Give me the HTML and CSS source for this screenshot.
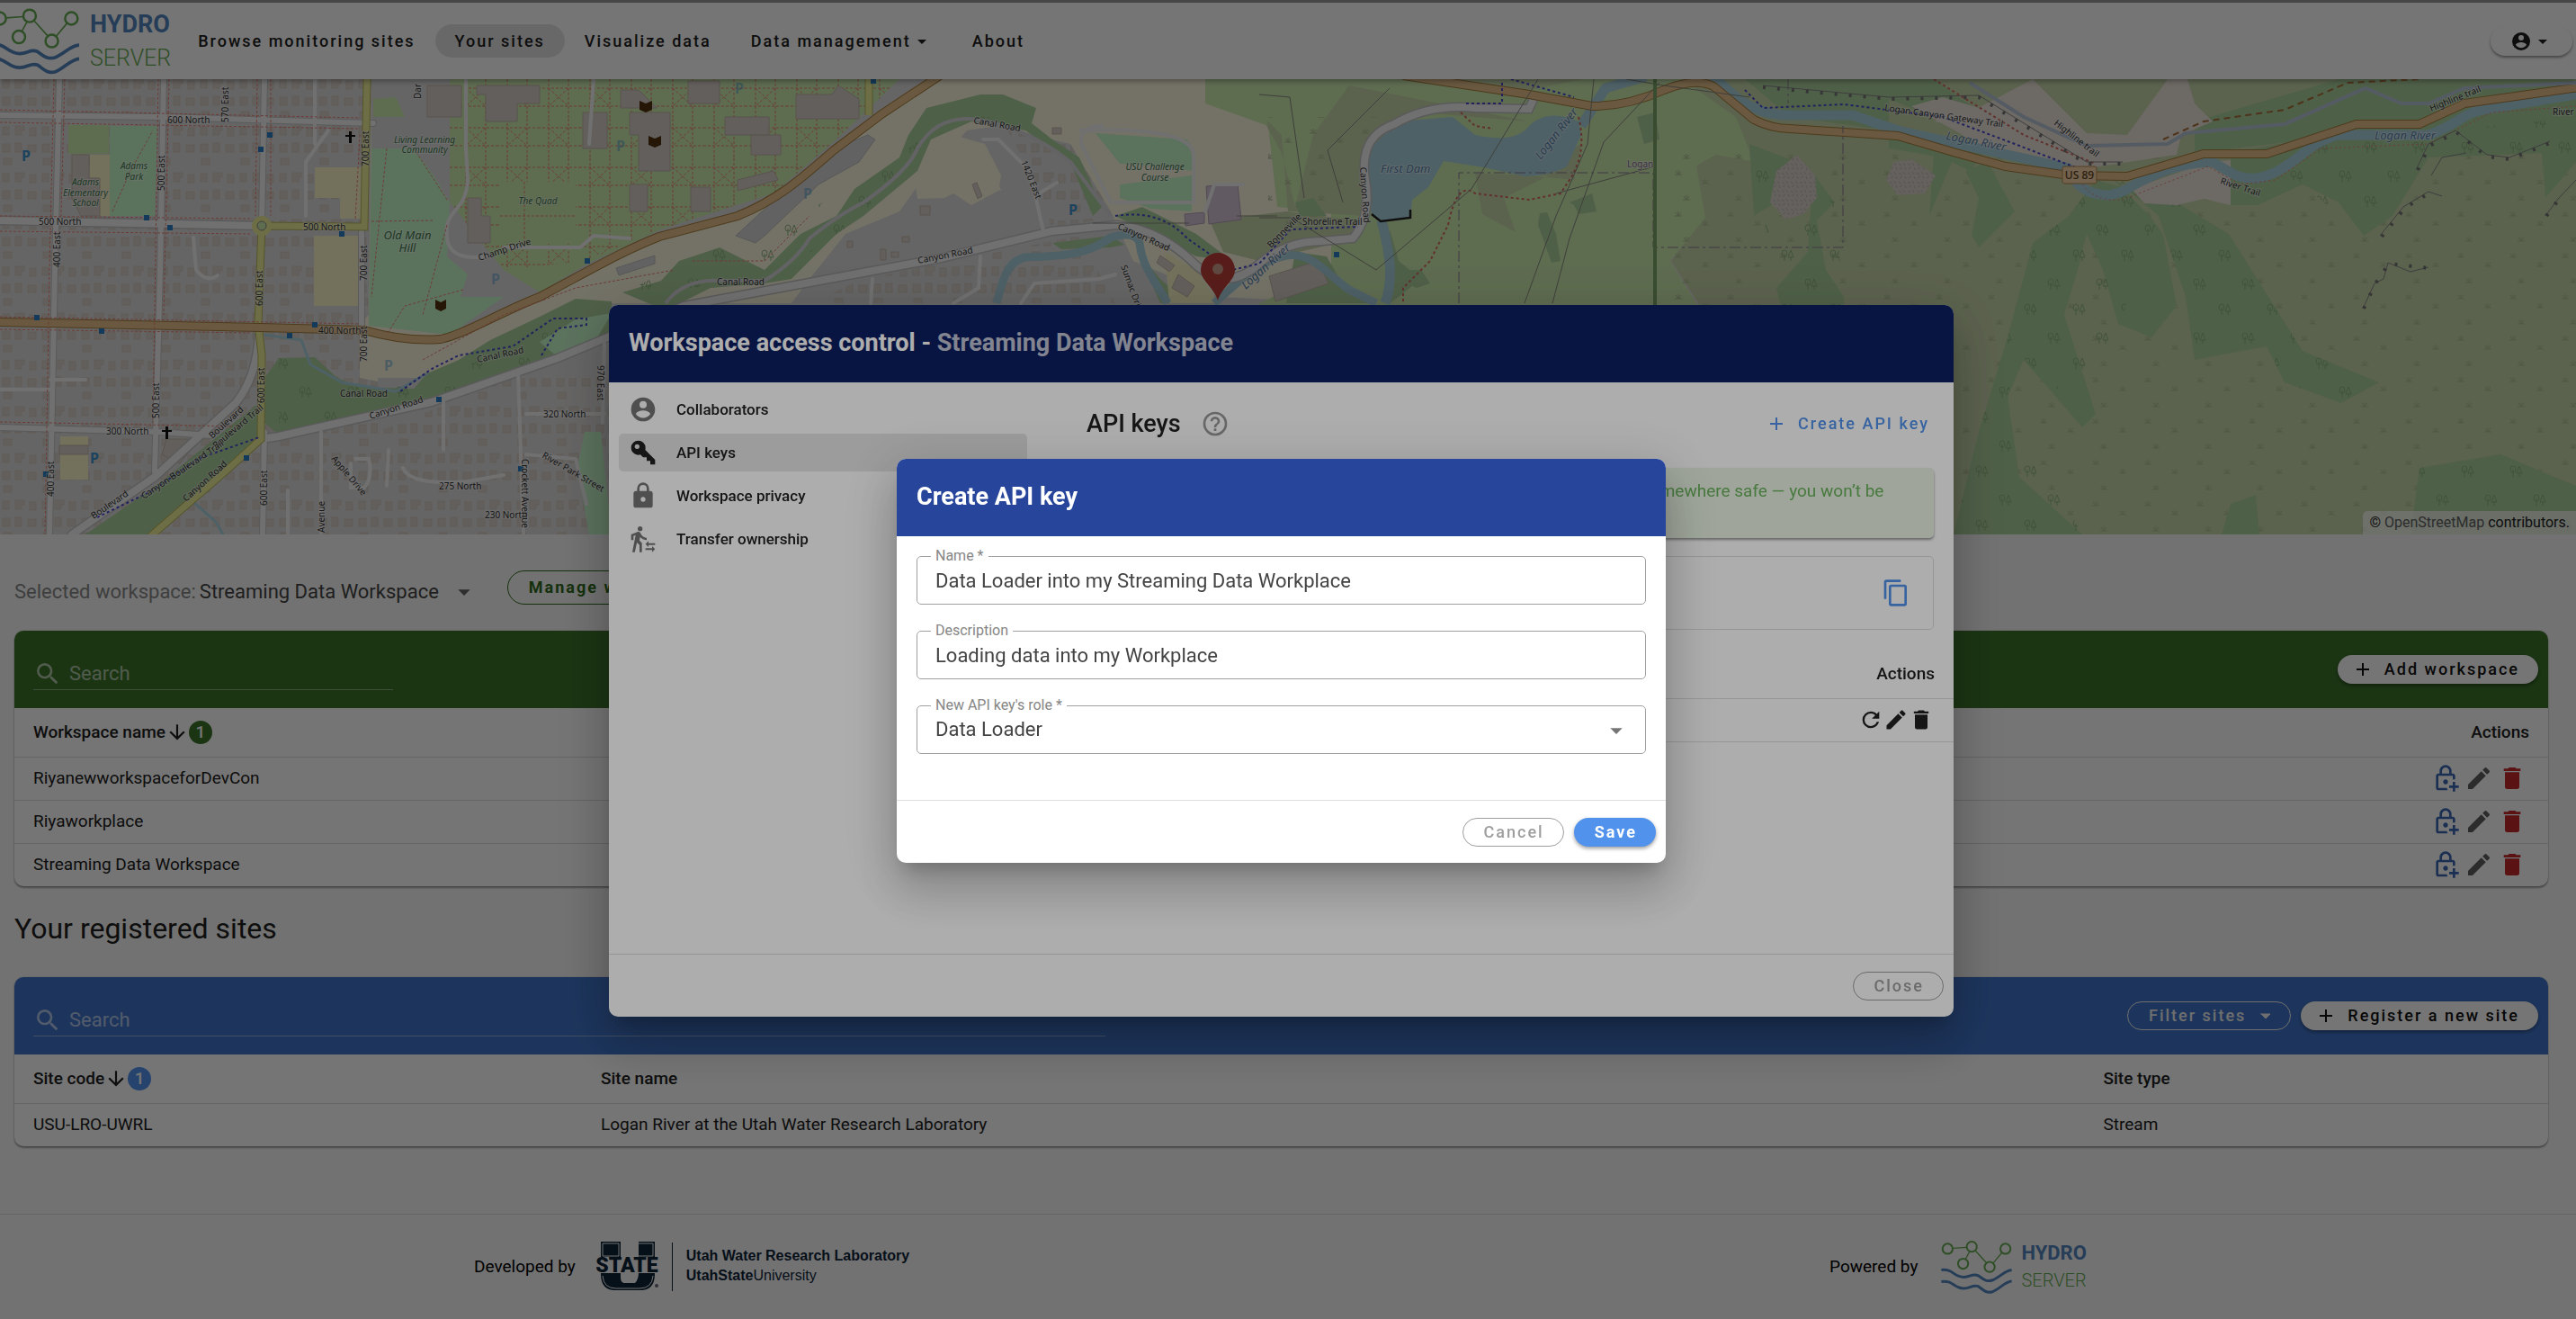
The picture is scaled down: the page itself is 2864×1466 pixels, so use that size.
FILE: index.html
```html
<!DOCTYPE html>
<html lang="en">
<head>
<meta charset="utf-8">
<meta name="viewport" content="width=device-width, initial-scale=1">
<title>HydroServer - Your sites</title>
<link rel="stylesheet" href="styles.css">
</head>
<body>
<svg class="defs" aria-hidden="true">
  <symbol id="i-account" viewBox="0 0 24 24"><path d="M12,19.2C9.5,19.2 7.29,17.92 6,16C6.03,14 10,12.9 12,12.9C14,12.9 17.97,14 18,16C16.71,17.92 14.5,19.2 12,19.2M12,5A3,3 0 0,1 15,8A3,3 0 0,1 12,11A3,3 0 0,1 9,8A3,3 0 0,1 12,5M12,2A10,10 0 0,0 2,12A10,10 0 0,0 12,22A10,10 0 0,0 22,12C22,6.47 17.5,2 12,2Z"/></symbol>
  <symbol id="i-down" viewBox="0 0 24 24"><path d="M7,10L12,15L17,10H7Z"/></symbol>
  <symbol id="i-key" viewBox="0 0 24 24"><path d="M22,18V22H18V19H15V16H12L9.74,13.74C9.19,13.91 8.61,14 8,14A6,6 0 0,1 2,8A6,6 0 0,1 8,2A6,6 0 0,1 14,8C14,8.61 13.91,9.19 13.74,9.74L22,18M7,5A2,2 0 0,0 5,7A2,2 0 0,0 7,9A2,2 0 0,0 9,7A2,2 0 0,0 7,5Z"/></symbol>
  <symbol id="i-lock" viewBox="0 0 24 24"><path d="M12,17A2,2 0 0,0 14,15C14,13.89 13.1,13 12,13A2,2 0 0,0 10,15A2,2 0 0,0 12,17M18,8A2,2 0 0,1 20,10V20A2,2 0 0,1 18,22H6A2,2 0 0,1 4,20V10C4,8.89 4.9,8 6,8H7V6A5,5 0 0,1 12,1A5,5 0 0,1 17,6V8H18M12,3A3,3 0 0,0 9,6V8H15V6A3,3 0 0,0 12,3Z"/></symbol>
  <symbol id="i-transfer" viewBox="0 0 24 24"><path d="M16.5,15.5H22V17H16.5V18.75L14,16.25L16.5,13.75V15.5M19.5,19.75V18L22,20.5L19.5,23V21.25H14V19.75H19.5M9.5,5.5A2,2 0 0,1 7.5,3.5A2,2 0 0,1 9.5,1.5A2,2 0 0,1 11.5,3.5A2,2 0 0,1 9.5,5.5M5.75,8.9L4,9.65V13H2V8.3L7.25,6.15C7.5,6.05 7.75,6 8,6C8.7,6 9.35,6.35 9.7,6.95L10.65,8.55C11.55,10 13.15,11 15,11V13C12.8,13 10.85,12 9.55,10.4L8.95,13.4L11,15.45V23H9V17L6.85,15L5.1,23H3L5.75,8.9Z"/></symbol>
  <symbol id="i-help" viewBox="0 0 24 24"><path d="M11,18H13V16H11V18M12,2A10,10 0 0,0 2,12A10,10 0 0,0 12,22A10,10 0 0,0 22,12A10,10 0 0,0 12,2M12,20C7.59,20 4,16.41 4,12C4,7.59 7.59,4 12,4C16.41,4 20,7.59 20,12C20,16.41 16.41,20 12,20M12,6A4,4 0 0,0 8,10H10A2,2 0 0,1 12,8A2,2 0 0,1 14,10C14,12 11,11.75 11,15H13C13,12.75 16,12.5 16,10A4,4 0 0,0 12,6Z"/></symbol>
  <symbol id="i-plus" viewBox="0 0 24 24"><path d="M19,13H13V19H11V13H5V11H11V5H13V11H19V13Z"/></symbol>
  <symbol id="i-copy" viewBox="0 0 24 24"><path d="M19,21H8V7H19M19,5H8A2,2 0 0,0 6,7V21A2,2 0 0,0 8,23H19A2,2 0 0,0 21,21V7A2,2 0 0,0 19,5M16,1H4A2,2 0 0,0 2,3V17H4V3H16V1Z"/></symbol>
  <symbol id="i-refresh" viewBox="0 0 24 24"><path d="M17.65,6.35C16.2,4.9 14.21,4 12,4A8,8 0 0,0 4,12A8,8 0 0,0 12,20C15.73,20 18.84,17.45 19.73,14H17.65C16.83,16.33 14.61,18 12,18A6,6 0 0,1 6,12A6,6 0 0,1 12,6C13.66,6 15.14,6.69 16.22,7.78L13,11H20V4L17.65,6.35Z"/></symbol>
  <symbol id="i-pencil" viewBox="0 0 24 24"><path d="M20.71,7.04C21.1,6.65 21.1,6 20.71,5.63L18.37,3.29C18,2.9 17.35,2.9 16.96,3.29L15.12,5.12L18.87,8.87M3,17.25V21H6.75L17.81,9.93L14.06,6.18L3,17.25Z"/></symbol>
  <symbol id="i-delete" viewBox="0 0 24 24"><path d="M19,4H15.5L14.5,3H9.5L8.5,4H5V6H19M6,19A2,2 0 0,0 8,21H16A2,2 0 0,0 18,19V7H6V19Z"/></symbol>
  <symbol id="i-lockplus" viewBox="0 0 24 24"><path d="M12 13C13.1 13 14 13.89 14 15C14 16.11 13.11 17 12 17S10 16.11 10 15 10.9 13 12 13M6 20V10H18V13.09C18.33 13.04 18.66 13 19 13C19.34 13 19.67 13.04 20 13.09V10C20 8.9 19.11 8 18 8H17V6C17 3.24 14.76 1 12 1S7 3.24 7 6V8H6C4.89 8 4 8.89 4 10V20C4 21.11 4.89 22 6 22H13.81C13.46 21.39 13.21 20.72 13.09 20H6M9 6C9 4.34 10.34 3 12 3S15 4.34 15 6V8H9V6M23 18V20H20V23H18V20H15V18H18V15H20V18H23Z"/></symbol>
  <symbol id="i-sort" viewBox="0 0 24 24"><path d="M11,4H13V16L18.5,10.5L19.92,11.92L12,19.84L4.08,11.92L5.5,10.5L11,16V4Z"/></symbol>
  <symbol id="i-search" viewBox="0 0 24 24"><path d="M9.5,3A6.5,6.5 0 0,1 16,9.5C16,11.11 15.41,12.59 14.44,13.73L14.71,14H15.5L20.5,19L19,20.5L14,15.5V14.71L13.73,14.44C12.59,15.41 11.11,16 9.5,16A6.5,6.5 0 0,1 3,9.5A6.5,6.5 0 0,1 9.5,3M9.5,5C7,5 5,7 5,9.5C5,12 7,14 9.5,14C12,14 14,12 14,9.5C14,7 12,5 9.5,5Z"/></symbol>
  <symbol id="i-hydro" viewBox="0 0 236 178">
    <g fill="none" stroke="#66aa52" stroke-width="6">
      <circle cx="21" cy="27" r="17"/><circle cx="102" cy="20" r="17"/><circle cx="73" cy="77" r="17"/><circle cx="162" cy="88" r="17"/><circle cx="215" cy="27" r="17"/>
      <path stroke-width="4" d="M38 25.500L85 22M95 36L81 62M114 33L151 74M174 75L203 40"/>
    </g>
    <path fill="none" stroke="#5585c0" stroke-width="9" d="M0 98C38 93 42 122 75 122C98 122 104 108 124 117C140 128 150 140 172 132C196 122 216 98 236 99M0 137C38 131 42 160 75 160C98 160 104 146 124 153C140 164 148 177 172 171C196 161 216 136 236 136"/>
  </symbol>
</svg>

<header class="nav">
  <a class="brand" href="#" aria-label="HydroServer">
    <svg class="brand-mark" aria-hidden="true"><use href="#i-hydro"/></svg>
    <span class="brand-words"><b>HYDRO</b><span>SERVER</span></span>
  </a>
  <nav class="nav-links">
    <a class="nav-link" href="#">Browse monitoring sites</a>
    <a class="nav-link active" href="#">Your sites</a>
    <a class="nav-link" href="#">Visualize data</a>
    <button class="nav-link" type="button">Data management<svg class="icon s24"><use href="#i-down"/></svg></button>
    <a class="nav-link" href="#">About</a>
  </nav>
  <button class="user" type="button" aria-label="Account"><svg class="icon s24"><use href="#i-account"/></svg><svg class="icon s24"><use href="#i-down"/></svg></button>
</header>

<section class="map" aria-label="Map of sites">
<svg class="map-art" viewBox="0 88 2864 506" preserveAspectRatio="xMidYMid slice">
  <defs>
    <pattern id="houses" width="44" height="52" patternUnits="userSpaceOnUse">
      <g fill="#d9d0c9" stroke="#cfc6be"><rect x="3" y="4" width="8" height="9"/><rect x="17" y="3" width="7" height="10"/><rect x="31" y="5" width="9" height="8"/><rect x="4" y="20" width="9" height="7"/><rect x="3" y="37" width="7" height="9"/><path d="M17 36h10v5h-3v5h-7z"/><rect x="33" y="38" width="7" height="9"/></g>
    </pattern>
    <pattern id="scrub" width="58" height="46" patternUnits="userSpaceOnUse">
      <g fill="none" stroke="#adbd92"><path d="M6 10h8M10 10v-5M7 6l3 4l3-4M36 20h8M40 20v-5M37 16l3 4l3-4M15 38h8M19 38v-5M16 34l3 4l3-4"/></g>
    </pattern>
    <pattern id="trees" width="54" height="60" patternUnits="userSpaceOnUse">
      <g fill="none" stroke="#8fb582"><path d="M12 22v-8M9 14a3 4 0 1 1 6 0a3 3 0 0 1-6 0M19 22v-5M16 18l3-8l3 8zM40 50v-8M37 42a3 4 0 1 1 6 0a3 3 0 0 1-6 0M47 50v-5M44 46l3-8l3 8z"/></g>
    </pattern>
    <pattern id="paths" width="46" height="44" patternUnits="userSpaceOnUse">
      <path d="M0 10H46M0 30H46M12 0V44M34 0V44M12 10L34 30M34 10L12 30" fill="none" stroke="#ee8378" stroke-dasharray="3 2"/>
    </pattern>
    <pattern id="rock" width="10" height="10" patternUnits="userSpaceOnUse"><rect width="10" height="10" fill="#dcd3ca"/><path d="M1 2l3 2M6 1l2 3M2 8l3-2M8 6l1 3" stroke="#bbb" fill="none"/></pattern>
  </defs>
  <rect y="88" width="2864" height="506" fill="#dfdddc"/>
  <rect y="88" width="700" height="506" fill="url(#houses)"/>

  <g class="land">
    <path fill="#fdf9e0" d="M413 88H1500V337H640L500 440L400 420V360L410 350Z"/>
    <path fill="#dddcdc" d="M413 88H1030L980 127L927 167L854 227L733 263L650 300L560 345L500 372L413 362Z"/>
    <path fill="#cdebb0" d="M500 88H1000L930 155L860 215L735 255L650 295L600 325L560 300L500 225Z"/>
    <path fill="url(#paths)" d="M500 88H1000L930 155L860 215L735 255L650 290L560 300L500 225Z"/>
    <path fill="#dddcdc" d="M1110 140L1075 145L1025 200L1000 235L940 260L900 310L880 337H1500L1355 330L1260 290L1235 235L1190 160Z"/>
    <path fill="#dddcdc" d="M420 480L620 400L760 345L700 420H420Z"/>
    <path fill="url(#houses)" d="M1120 145L1190 160L1235 235L1240 240L1170 255L1145 190ZM960 310L1200 262L1240 337H900Z"/>
    <path fill="#fdf9e0" d="M1078 190L1092 207L1113 212L1105 188zM1017 200L1020 221L1050 220L1060 215L1080 228L1110 212L1113 195L1095 160L1060 150L1035 170Z"/>
    <path fill="#cdebb0" d="M1340 88H1840V594H1440L1400 337L1480 300V235L1420 230L1410 140L1340 115Z"/>
    <path fill="#c8d7ab" d="M1400 125L1425 150L1432 235L1520 240L1540 150L1580 125L1700 135L1500 95L1460 150L1440 230L1425 170ZM1345 245L1430 235L1510 245L1510 265L1400 290L1360 280Z"/>
    <path fill="#c8d7ab" d="M1640 193L1648 238L1685 258L1672 220L1722 195zM1758 160L1750 200L1700 195ZM1550 88H1760L1700 100ZM1840 88H2864V594H1860L1890 340L1858 290L1895 240L1885 185L1908 170L1840 170Z"/>
    <path fill="#cdebb0" d="M1840 88H1870L1930 130L1950 180L1908 172L1886 184L1896 242L1857 290L1888 340H1840Z"/>
    <path fill="url(#scrub)" d="M1858 160H2864V594H1860ZM1410 130H1540V260H1410Z"/>
  </g>

  <g class="woods" fill="#add19e">
    <path d="M2172 594L2200 480L2232 375L2260 270L2300 240L2330 200L2420 225L2478 260L2560 390L2645 425L2603 448L2540 425L2520 385L2440 400L2430 330L2400 240L2340 190L2390 240L2405 260L2420 340L2392 375L2355 360L2338 300L2320 260L2310 300L2295 350L2330 460L2315 475L2250 400L2232 440L2245 530L2315 594Z"/>
    <path d="M1945 160L2010 185L2040 225L2020 245L2030 300L2050 330L2050 340H1980L1975 320L2010 280L2015 200L1950 240ZM2090 140L2210 165L2190 190L2170 180L2145 240L2150 170ZM2210 180L2240 235L2213 262L2200 275L2192 262L2200 220L2185 190Z"/>
    <path d="M2480 170L2864 100V180L2830 220L2826 170L2700 175L2660 240L2628 262L2600 225L2560 205L2510 228H2480ZM2440 135L2600 88H2864V120L2700 140L2440 170ZM2100 88H2150L2260 165L2200 150L2100 110ZM2100 145L2280 195L2100 165Z"/>
    <path d="M2690 520L2780 505L2864 540V594H2680ZM2480 560L2508 550L2512 594H2470ZM1940 88H2100V145L1990 130Z"/>
    <path d="M1550 300L1580 300L1590 315L1575 320L1555 312ZM1712 237L1720 236L1730 260L1735 290L1725 292L1710 250ZM1745 225L1770 215L1775 235L1755 238L1750 228ZM1440 225L1460 220L1475 240L1445 240ZM1820 130L1840 125L1845 155L1828 160Z"/>
    <path d="M310 398L350 397L375 420L400 430L460 432L475 415L510 400L545 378L600 352L640 332L680 335V378L620 398L480 447L310 483L294 470L294 420ZM290 488L250 520L205 562L165 594H95L130 570L180 535L285 450Z"/>
    <path d="M692 325L735 312L755 290L800 275L850 300L890 260L930 240L950 210L1000 175L1010 150L1030 120L1090 105L1115 105L1152 120L1147 137L1170 155L1200 175L1225 230L1215 240L1190 180L1140 145L1080 135L1035 155L1020 190L960 240L930 260L880 310L850 315L790 320L740 345Z"/>
    <path d="M1240 240L1270 230L1330 260L1370 290L1330 285L1270 255ZM1170 270L1235 262L1250 272L1235 275L1180 277ZM1265 280L1290 310L1320 337H1290ZM1440 280L1475 285L1495 320L1530 337H1430ZM1545 255L1555 290L1580 310L1555 330L1545 337Z"/>
  </g>
  <path fill="url(#trees)" d="M2172 594L2200 480L2232 375L2260 270L2300 240L2330 200L2420 225L2478 260L2560 390L2645 425L2603 448L2540 425L2520 385L2440 400L2430 330L2400 240L2320 460L2250 400L2232 440L2315 594ZM2480 170L2864 130V180L2700 175L2628 262L2560 205ZM1945 160L2040 225L2050 340H1980ZM310 398L460 432L680 335L620 398L480 447L310 483ZM692 325L800 275L950 210L1090 105L1152 120L1080 135L960 240L850 315ZM2690 520L2780 505L2864 540V594H2680Z"/>
  <path fill="#eee5dc" d="M2260 88L2320 148L2365 150L2410 88H2432L2440 115L2460 135L2425 150L2420 172L2300 190L2180 140L2150 135L2190 125ZM2370 210L2455 180L2480 178V228L2450 221L2420 228L2384 226ZM2125 118L2160 108L2200 120L2280 180L2200 160Z"/>
  <path fill="url(#rock)" d="M1998 172L2018 195L2020 220L2005 238L1985 244L1968 225L1975 190ZM2125 177L2152 195L2140 215L2110 217L2097 200L2105 180Z"/>

  <!-- Parks, fields and large buildings -->
  <g>
    <path fill="#c8facc" d="M413 165L460 165L482 195L500 225L497 285L520 305L512 330L560 330L500 372L410 362ZM122 140L175 140L172 240H122ZM1218 148L1320 155L1328 170L1325 190L1295 185L1245 182ZM1245 205L1325 195V235L1280 232L1245 220ZM660 382L618 395L600 380L640 355L680 348ZM650 480H668L680 594H655L642 520Z"/>
    <path fill="#cdebb0" d="M556 202H640V271H556ZM76 139H121V171H76ZM415 110L440 108L450 130L415 130ZM1350 88H1400L1410 140L1350 115Z"/>
    <path fill="#fbf7c8" d="M350 186H402V243H378V220H350ZM100 172H122V240H110V198H100ZM67 485H98V533H67ZM349 262H400V340H349ZM1295 280L1330 300L1355 337H1300Z"/>
    <path fill="#d9d0c9" stroke="#c3b6aa" d="M530 95H600V115H575V135H540V105H530ZM475 95H513V130H475ZM80 172H99V198H111V240H90L80 220ZM520 220H535V240H545V270H520ZM648 125H675V165H648ZM690 100H710L730 120H690ZM700 125H745V190H710V150H700ZM765 90H800V115H765ZM806 130H855V150H806ZM885 105H925L932 95L955 110V132H885ZM835 150H868V172H835ZM768 208H790V235H768ZM700 205H720V235H700ZM185 488H212V500L200 515L180 505ZM66 495H98V505H66ZM820 200L860 190L865 200L820 212Z"/>
    <path fill="#d3c5d6" stroke="#b5a0b8" d="M1341 207L1376 204L1380 244L1344 249ZM1317 238L1339 236V248L1318 251Z"/>
    <path fill="#d9d0c9" stroke="#c3b6aa" d="M1411 307L1465 290L1477 315L1418 335ZM1290 284L1306 295L1300 302L1286 292ZM1310 305L1328 318L1320 330L1303 320ZM1081 205L1086 203L1092 218L1087 221ZM1170 142h10v7h-10zM1023 229h11v10h-11zM942 268h6v7h-6zM979 277h6v12h-6zM991 280h8v6h-8zM1003 263h8v6h-8z"/>
    <path fill="#d6d6d6" stroke="#bfbfbf" d="M818 262L880 205L900 190L940 160L965 150L973 155L955 180L910 205L850 262L840 270ZM685 298L728 284L728 293L688 306Z"/>
  </g>

  <g fill="none" stroke="#aad3df" stroke-linejoin="round">
    <path stroke-width="9" d="M1108 337C1115 310 1120 290 1140 286C1180 284 1205 285 1235 264Q1262 256 1267 270C1270 300 1290 320 1298 337M1350 337C1380 310 1400 290 1430 284C1460 280 1475 305 1500 322L1530 337"/>
    <path stroke-width="11" d="M1536 245C1545 280 1550 310 1540 337M1830 85L1785 98L1758 140M1905 85C1930 110 1950 128 1990 128L2060 128L2110 145L2200 165L2300 187Q2310 217 2345 217Q2360 214 2370 207C2400 190 2430 180 2460 180C2480 192 2490 200 2510 198C2550 190 2560 160 2600 150H2700C2730 140 2740 125 2760 122L2864 105"/>
    <path stroke-width="3" d="M294 372L335 378L345 405L380 425L440 435L475 415M165 594L215 558L240 580L248 594"/>
  </g>
  <path fill="#aad3df" d="M1523 165L1555 135L1615 130L1640 150Q1685 160 1700 140Q1720 120 1755 135L1758 150L1742 185Q1725 195 1695 196L1650 186L1605 179L1588 208L1570 222L1568 242L1535 245L1525 238L1518 200Z"/>
  <path fill="none" stroke="#222" stroke-width="2.500" d="M1525 238L1535 246L1568 242V233"/>

  <!-- Streets -->
  <g class="streets" fill="none">
    <path class="case" stroke-width="8" d="M66 88L61 300L55 594M182 88L178 300L172 524M294 88L291 250M0 128L183 130L415 137M0 475L175 480L235 484M294 480L292 594M402 258V365"/>
    <path class="case" stroke-width="11" d="M0 245L291 251M80 594L172 530L262 448Q285 420 288 372M290 488L310 485L480 447L620 398L760 340L1046 287L1169 257L1242 250Q1290 255 1330 295Q1365 325 1400 293Q1430 268 1470 268L1504 265Q1525 240 1518 200C1512 160 1530 145 1550 138Q1590 115 1640 120L1700 121L1706 108"/>
    <path class="white" stroke-width="6" d="M66 88L61 300L55 594M182 88L178 300L172 524M294 88L291 250M0 128L183 130L415 137M0 475L175 480L235 484M294 480L292 594M402 258V365"/>
    <path class="white" stroke-width="4" d="M357 480V594M493 445V500M576 415L582 594M585 460H672M365 145L340 180V240M350 160V88M215 264L218 300Q230 315 242 306M660 88L655 160M0 433H56M56 422H95M320 545V594M448 520Q455 540 520 535L560 528M585 505L640 510L652 560M970 310L968 337M1090 285L1088 320L1060 337M1160 257L1145 190L1110 155L1093 155M1155 215L1175 203M1240 305L1222 310L1150 315L1135 337M430 540L432 500M672 382L670 470M395 510H410Q415 530 405 542H390V515"/>
    <path class="white" stroke-width="4" d="M518 88V165L520 200C518 240 490 230 498 270Q505 290 540 285M560 275H645L660 262L700 265M1201 145Q1330 140 1327 175V225L1240 225M1340 235L1350 205H1382M1225 140Q1200 140 1202 160L1235 225"/>
    <path stroke="#d9d9dd" stroke-width="4" d="M740 337Q760 310 800 312L850 312Q885 290 900 265Q930 240 960 225Q1010 190 1020 165Q1040 130 1080 132Q1140 140 1190 180L1235 240"/>
    <path class="white" stroke-width="8" d="M0 245L291 251M80 594L172 530L262 448Q285 420 288 372M290 488L310 485L480 447L620 398L760 340L1046 287L1169 257L1242 250Q1290 255 1330 295Q1365 325 1400 293Q1430 268 1470 268L1504 265Q1525 240 1518 200C1512 160 1530 145 1550 138Q1590 115 1640 120L1700 121L1706 108"/>
    <path stroke="#b9b85e" stroke-width="9" d="M408 88L405 252L291 251L287 360L291 395L290 488L255 520L165 598M966 88V128"/>
    <path stroke="#eef09a" stroke-width="7" d="M408 88L405 252L291 251L287 360L291 395L290 488L255 520L165 598M966 88V128"/>
    <circle cx="291" cy="251" r="11" fill="#eef09a"/><circle cx="291" cy="251" r="5" fill="#cdebb0" stroke="#888"/>
    <path stroke="#a9813f" stroke-width="10" d="M0 358L290 364L405 367Q450 380 490 377C520 370 560 345 600 330C660 298 690 280 733 263L820 240C870 220 900 190 927 167L980 127L1045 84M1560 84L1700 105L1770 118Q1810 118 1850 100Q1885 86 1905 96L1950 133Q1970 143 1990 143L2110 151L2175 170L2230 185L2300 195L2365 196L2450 171H2520L2620 138H2690L2740 115L2868 97"/>
    <path stroke="#e6c28c" stroke-width="8" d="M0 358L290 364L405 367Q450 380 490 377C520 370 560 345 600 330C660 298 690 280 733 263L820 240C870 220 900 190 927 167L980 127L1045 84M1560 84L1700 105L1770 118Q1810 118 1850 100Q1885 86 1905 96L1950 133Q1970 143 1990 143L2110 151L2175 170L2230 185L2300 195L2365 196L2450 171H2520L2620 138H2690L2740 115L2868 97"/>
  </g>

  <!-- Footways, trails, power lines, boundaries -->
  <g fill="none">
    <path stroke="#ee8378" stroke-dasharray="3 2" d="M60 88L55 300L50 594M72 88L68 240M176 88L170 470M188 88L182 350M286 88L284 240M301 88V240M0 122L400 131M0 136L400 143M0 352L400 360M0 366L280 370M0 240L280 243M0 257L280 260M0 469L270 474M400 150L395 245M583 202V270M556 240H640M413 246L482 245M460 165L497 222M430 165L413 330M497 250L470 350M515 322L450 340L430 372M125 235L145 190L170 145M470 400L560 350L640 320L750 300M770 290L850 290L900 240"/>
    <path stroke="#d66b62" stroke-width="2" stroke-dasharray="3 3" d="M1755 130Q1765 170 1745 200L1735 215L1700 222L1640 215Q1620 200 1610 250L1590 290L1560 320V337M1624 125L1640 140L1660 143M2150 88L2250 150L2330 182"/>
    <path stroke="#4b4bd0" stroke-width="2" stroke-dasharray="3 3" d="M108 575L170 545L220 510L288 486M602 395L620 365L652 361V354L615 354L570 385L510 395L480 410L445 435M1240 240Q1290 232 1320 265L1370 300L1400 293L1435 255L1510 252M1630 115H1670V90M1680 88L1750 108M1940 100L1960 120L2050 116L2160 130L2240 160L2310 187"/>
    <path stroke="#8a8a80" d="M1710 88L1636 210L1530 300L1436 242H1400M1772 88L1765 160L1730 240L1695 337M1845 92L1783 158L1745 265L1726 337M1400 105L1434 108L1450 220M1545 98L1476 167L1493 225M1840 185L1730 215M1808 88L1850 95L1945 108M1375 240H1420M1215 248H1322"/>
    <path stroke="#8d7f91" stroke-dasharray="12 4 3 4" d="M1622 337V192H1838V275H2049V140M1988 88V115"/>
    <path stroke="#7da76a" stroke-width="4" d="M1840 88V594"/>
    <path stroke="#a9713a" stroke-width="2" stroke-dasharray="7 5" d="M2405 155L2450 135L2540 122L2610 92L2690 88"/>
    <path stroke="#b8c7d8" stroke-width="4" d="M2190 92L2250 130L2320 162L2410 160L2430 148L2540 138L2630 98L2670 115L2700 115L2740 98L2864 92"/>
    <path stroke="#ee8378" stroke-dasharray="2 3" d="M2315 205Q2330 225 2360 222L2455 185L2490 205L2530 200L2580 165L2700 160L2770 125L2864 118"/>
    <path stroke="#888" d="M1960 95L2100 108L2200 106L2320 180L2360 180M2687 187L2700 160L2730 145L2765 172L2790 175L2835 157M2703 195L2715 175L2742 170M2646 262L2672 230L2700 213L2715 218M2627 343L2640 315L2650 310L2655 292L2680 302L2700 297M2830 240L2845 220L2864 200"/>
    <path stroke="#777" stroke-width="4" stroke-dasharray="3 13" d="M1960 97L2100 110L2200 108L2320 182L2360 182M2688 189L2701 162L2731 147L2765 174L2790 177L2835 159M2648 263L2674 231L2700 215M2628 343L2641 315L2656 293L2700 298M2831 240L2846 220"/>
  </g>

  <path fill="#2b7fc4" d="M297 147h6v6h-6zM287 163h6v6h-6zM160 239h6v6h-6zM186 250h6v6h-6zM377 257h6v6h-6zM38 350h6v6h-6zM110 365h6v6h-6zM347 358h6v6h-6zM319 370h6v6h-6zM485 441h6v6h-6zM271 506h6v6h-6zM48 524h6v6h-6zM576 518h6v6h-6zM650 287h6v6h-6zM968 87h6v6h-6zM1483 280h6v6h-6z"/>
  <path fill="#51310f" d="M711 112l7 3l7-3v10l-7 3l-7-3zM721 151l7 3l7-3v10l-7 3l-7-3zM484 333l6 3l6-3v10l-6 3l-6-3z"/>
  <path fill="#111" d="M388 146h3v4h4v2h-4v7h-3v-7h-4v-2h4zM184 474h3v4h4v2h-4v8h-3v-8h-4v-2h4z"/>

  <g class="lbl">
    <text x="186" y="137">600 North</text><text x="43" y="250">500 North</text><text x="337" y="256">500 North</text><text x="354" y="371">400 North</text><text x="118" y="483">300 North</text>
    <text x="604" y="464">320 North</text><text x="488" y="544">275 North</text><text x="539" y="576">230 North</text>
    <text transform="translate(67 297) rotate(-90)">400 East</text><text transform="translate(60 552) rotate(-90)">400 East</text><text transform="translate(183 212) rotate(-90)">500 East</text><text transform="translate(177 465) rotate(-90)">500 East</text>
    <text transform="translate(292 340) rotate(-90)">600 East</text><text transform="translate(294 448) rotate(-90)">600 East</text><text transform="translate(297 562) rotate(-90)">600 East</text><text transform="translate(254 136) rotate(-90)">570 East</text>
    <text transform="translate(410 185) rotate(-90)">700 East</text><text transform="translate(408 312) rotate(-90)">700 East</text><text transform="translate(408 402) rotate(-90)">700 East</text><text transform="translate(361 592) rotate(-90)">Avenue</text>
    <text transform="translate(580 510) rotate(90)">Crockett Avenue</text><text transform="translate(664 406) rotate(90)">970 East</text><text transform="translate(468 110) rotate(-90)">Dar</text>
    <text transform="translate(104 577) rotate(-34)">Boulevard</text><text transform="translate(236 488) rotate(-42)">Boulevard</text><text transform="translate(240 499) rotate(-40)">Boulevard Trail</text><text transform="translate(160 555) rotate(-34)">Canyon Boulevard Trail</text><text transform="translate(207 558) rotate(-42)">Canyon Road</text>
    <text transform="translate(412 466) rotate(-18)">Canyon Road</text><text x="378" y="441">Canal Road</text><text transform="translate(531 403) rotate(-12)">Canal Road</text><text transform="translate(533 290) rotate(-18)">Champ Drive</text>
    <text transform="translate(368 510) rotate(50)">Apple Drive</text><text transform="translate(602 508) rotate(30)">River Park Street</text>
    <text transform="translate(1082 137) rotate(10)">Canal Road</text><text x="797" y="317">Canal Road</text><text transform="translate(1021 293) rotate(-11)">Canyon Road</text><text transform="translate(1242 254) rotate(24)">Canyon Road</text>
    <text transform="translate(1135 180) rotate(68)">1420 East</text><text transform="translate(1246 296) rotate(70)">Sumac Drive</text><text transform="translate(1512 186) rotate(86)">Canyon Road</text>
    <text transform="translate(1413 276) rotate(-45)">Bonneville</text><text x="1448" y="250">Shoreline Trail</text><text transform="translate(2095 123) rotate(8)">Logan Canyon Gateway Trail</text>
    <text transform="translate(2283 138) rotate(38)">Highline trail</text><text transform="translate(2703 124) rotate(-22)">Highline trail</text><text transform="translate(2468 204) rotate(18)">River Trail</text><text x="2838" y="128">River</text><text x="1809" y="186" fill="#8a6a92">Logan</text>
  </g>
  <g class="lbl green">
    <text x="149" y="188" text-anchor="middle">Adams<tspan x="149" dy="12">Park</tspan></text><text x="95" y="206" text-anchor="middle">Adams<tspan x="95" dy="12">Elementary</tspan><tspan x="95" dy="11">School</tspan></text>
    <text class="big" x="453" y="266" text-anchor="middle">Old Main<tspan x="453" dy="14">Hill</tspan></text><text x="598" y="227" text-anchor="middle">The Quad</text><text x="1284" y="189" text-anchor="middle">USU Challenge<tspan x="1284" dy="12">Course</tspan></text>
    <text x="472" y="159" text-anchor="middle">Living Learning<tspan x="472" dy="11">Community</tspan></text>
  </g>
  <g class="lbl blue big">
    <text x="1535" y="192">First Dam</text><text transform="translate(1713 178) rotate(-52)">Logan River</text><text transform="translate(1385 322) rotate(-42)">Logan River</text><text transform="translate(2163 155) rotate(11)">Logan River</text><text x="2640" y="155">Logan River</text>
  </g>
  <g class="park-p"><text x="24" y="179">P</text><text x="100" y="515">P</text><g opacity=".45"><text x="546" y="316">P</text><text x="427" y="412">P</text><text x="685" y="168">P</text><text x="893" y="221">P</text><text x="817" y="104">P</text></g><text x="1188" y="239">P</text></g>
  <rect x="2293" y="185" width="38" height="19" rx="2" fill="#f6d3a8" stroke="#b98b50"/><text class="shield" x="2312" y="199" text-anchor="middle">US 89</text>
  <path fill="#c0403a" d="M1354 334C1349 318 1335 312 1335 300A19 19 0 1 1 1373 300C1373 312 1359 318 1354 334Z"/><circle cx="1354" cy="299" r="6" fill="#cfa08f"/>
</svg>
<p class="attribution">© <a href="#">OpenStreetMap</a> contributors.</p>
</section>

<main class="page">
  <div class="picker">
    <label for="ws">Selected workspace:</label>
    <div class="picker-control"><select id="ws"><option>Streaming Data Workspace</option></select><svg class="icon s32"><use href="#i-down"/></svg></div>
    <button class="btn outline green" type="button">Manage workspace</button>
  </div>

  <section class="card">
    <div class="bar bar-green">
      <label class="search"><svg class="icon s32"><use href="#i-search"/></svg><input type="text" placeholder="Search" aria-label="Search workspaces"></label>
      <button class="btn light" type="button"><svg class="icon s24"><use href="#i-plus"/></svg>Add workspace</button>
    </div>
    <table>
      <thead><tr><th><span class="sort">Workspace name<svg class="icon"><use href="#i-sort"/></svg><span class="badge">1</span></span></th><th class="right">Actions</th></tr></thead>
      <tbody>
        <tr><td>RiyanewworkspaceforDevCon</td><td><div class="actions"><button type="button" aria-label="Access" class="c-blue"><svg class="icon s32"><use href="#i-lockplus"/></svg></button><button type="button" aria-label="Edit" class="c-grey"><svg class="icon s32"><use href="#i-pencil"/></svg></button><button type="button" aria-label="Delete" class="c-red"><svg class="icon s32"><use href="#i-delete"/></svg></button></div></td></tr>
        <tr><td>Riyaworkplace</td><td><div class="actions"><button type="button" aria-label="Access" class="c-blue"><svg class="icon s32"><use href="#i-lockplus"/></svg></button><button type="button" aria-label="Edit" class="c-grey"><svg class="icon s32"><use href="#i-pencil"/></svg></button><button type="button" aria-label="Delete" class="c-red"><svg class="icon s32"><use href="#i-delete"/></svg></button></div></td></tr>
        <tr><td>Streaming Data Workspace</td><td><div class="actions"><button type="button" aria-label="Access" class="c-blue"><svg class="icon s32"><use href="#i-lockplus"/></svg></button><button type="button" aria-label="Edit" class="c-grey"><svg class="icon s32"><use href="#i-pencil"/></svg></button><button type="button" aria-label="Delete" class="c-red"><svg class="icon s32"><use href="#i-delete"/></svg></button></div></td></tr>
      </tbody>
    </table>
  </section>

  <h2>Your registered sites</h2>

  <section class="card">
    <div class="bar bar-blue">
      <label class="search wide"><svg class="icon s32"><use href="#i-search"/></svg><input type="text" placeholder="Search" aria-label="Search sites"></label>
      <button class="btn outline white" type="button">Filter sites<svg class="icon s24"><use href="#i-down"/></svg></button>
      <button class="btn light" type="button"><svg class="icon s24"><use href="#i-plus"/></svg>Register a new site</button>
    </div>
    <table class="sites">
      <thead><tr><th><span class="sort">Site code<svg class="icon"><use href="#i-sort"/></svg><span class="badge blue">1</span></span></th><th>Site name</th><th>Site type</th></tr></thead>
      <tbody><tr><td>USU-LRO-UWRL</td><td>Logan River at the Utah Water Research Laboratory</td><td>Stream</td></tr></tbody>
    </table>
  </section>
</main>

<footer class="footer">
  <div class="credit">Developed by
    <svg class="usu" viewBox="0 0 76 56" aria-hidden="true">
      <path fill="#0f2439" d="M6 0H28V34Q28 42 32 46H44Q48 42 48 34V0H66V36Q66 54 50 54H22Q6 54 6 36Z"/>
      <path fill="#f9f9f9" d="M28 0H44V20H28ZM28 34H46V40Q46 46 41 46H33Q28 46 28 40Z"/>
      <path fill="none" stroke="#f9f9f9" d="M8 2H26V16H8ZM46 2H64V16H46ZM8 38Q9 52 23 52H49Q63 52 64 38"/>
      <rect y="17" width="70" height="18" fill="#f9f9f9"/>
      <text x="35" y="34" text-anchor="middle">STATE</text><circle cx="68" cy="49" r="2" fill="#667"/>
    </svg>
    <div class="usu-words"><strong>Utah Water Research Laboratory</strong><span><b>UtahState</b>University</span></div>
  </div>
  <div class="credit">Powered by
    <span class="brand small"><svg class="brand-mark" aria-hidden="true"><use href="#i-hydro"/></svg><span class="brand-words"><b>HYDRO</b><span>SERVER</span></span></span>
  </div>
</footer>

<div class="overlay">
  <section class="dialog access" role="dialog" aria-label="Workspace access control">
    <h3 class="dialog-title navy">Workspace access control - <span>Streaming Data Workspace</span></h3>
    <div class="access-body">
      <nav class="side">
        <a href="#"><svg class="icon s32"><use href="#i-account"/></svg>Collaborators</a>
        <a href="#" class="on"><svg class="icon s32"><use href="#i-key"/></svg>API keys</a>
        <a href="#"><svg class="icon s32"><use href="#i-lock"/></svg>Workspace privacy</a>
        <a href="#"><svg class="icon s32"><use href="#i-transfer"/></svg>Transfer ownership</a>
      </nav>
      <div class="panel">
        <div class="panel-head"><h4>API keys</h4><svg class="icon s32 c-help"><use href="#i-help"/></svg><button class="btn text" type="button"><svg class="icon s24"><use href="#i-plus"/></svg>Create API key</button></div>
        <p class="notice">Your new API key has been created. Copy the key value now and store it somewhere safe — you won’t be<br>able to see it again.</p>
        <div class="keybox"><button type="button" aria-label="Copy key"><svg class="icon s32"><use href="#i-copy"/></svg></button></div>
        <table class="keys">
          <thead><tr><th>Name</th><th class="right">Actions</th></tr></thead>
          <tbody><tr><td></td><td><div class="actions tight"><button type="button" aria-label="Regenerate"><svg class="icon s28"><use href="#i-refresh"/></svg></button><button type="button" aria-label="Edit"><svg class="icon s28"><use href="#i-pencil"/></svg></button><button type="button" aria-label="Delete"><svg class="icon s28"><use href="#i-delete"/></svg></button></div></td></tr></tbody>
        </table>
      </div>
    </div>
    <div class="dialog-foot"><button class="btn outline grey" type="button">Close</button></div>
  </section>
</div>

<div class="overlay">
  <form class="dialog create" role="dialog" aria-label="Create API key">
    <h3 class="dialog-title royal">Create API key</h3>
    <div class="fields">
      <div class="field"><label for="f-name">Name *</label><input id="f-name" type="text" value="Data Loader into my Streaming Data Workplace"></div>
      <div class="field"><label for="f-desc">Description</label><input id="f-desc" type="text" value="Loading data into my Workplace"></div>
      <div class="field"><label for="f-role">New API key's role *</label><select id="f-role"><option>Data Loader</option></select><svg class="icon s32 field-caret"><use href="#i-down"/></svg></div>
    </div>
    <div class="dialog-foot"><button class="btn outline grey" type="button">Cancel</button><button class="btn save" type="button">Save</button></div>
  </form>
</div>
</body>
</html>
```
FILE: styles.css
```css
:root {
  --ink: #212121;
  --green: #3c752b;
  --blue: #4175cb;
  --sky: #5193ec;
  --line: #dedede;
}
* { box-sizing: border-box; }
body {
  margin: 0;
  min-height: 100vh;
  background: #f9f9f9;
  color: var(--ink);
  font: 400 19px/28px Roboto, "Liberation Sans", sans-serif;
}
button, input, select { font: inherit; color: inherit; margin: 0; }
button { background: none; border: 0; padding: 0; }
a { color: inherit; text-decoration: none; }
h2, h3, h4, p { margin: 0; }
.defs { position: absolute; width: 0; height: 0; }
.icon { flex: none; fill: currentColor; display: block; }
.s24 { width: 24px; height: 24px; }
.s28 { width: 28px; height: 28px; }
.s32 { width: 32px; height: 32px; }

/* Top navigation */
.nav {
  position: relative;
  z-index: 1;
  display: flex;
  align-items: center;
  height: 88px;
  padding-right: 4px;
  border-top: 3px solid #999;
  background: #fff;
  box-shadow: 0 2px 6px rgba(0, 0, 0, .35);
}
.brand { display: flex; align-items: center; gap: 12px; margin-left: -9px; }
.brand-mark { width: 97px; height: 74px; flex: none; }
.brand-words { display: flex; flex-direction: column; font-size: 27px; line-height: 38px; color: #5585c0; }
.brand-words b { font-weight: 700; }
.brand-words span { font-weight: 300; font-size: 25px; color: #66aa52; }
.nav-links { display: flex; flex: 1; margin-left: 8px; }
.nav-link {
  display: flex;
  align-items: center;
  height: 37px;
  padding: 0 22px;
  border-radius: 20px;
  font-size: 18px;
  font-weight: 500;
  letter-spacing: 2px;
  white-space: nowrap;
}
.nav-link.active { background: #e4e4e4; }
.user {
  display: flex;
  align-items: center;
  justify-content: center;
  width: 91px;
  height: 32px;
  border-radius: 16px;
  background: #fff;
  box-shadow: 0 2px 3px rgba(0, 0, 0, .4);
}

/* Map */
.map { position: relative; height: 506px; overflow: hidden; }
.map-art { display: block; width: 100%; height: 100%; }
.case { stroke: #c4c4c4; stroke-linecap: round; }
.white { stroke: #f4f4f4; stroke-linecap: round; }
.lbl { font: 10px "Noto Sans", sans-serif; fill: #333; stroke: rgba(255, 255, 255, .45); stroke-width: 2px; paint-order: stroke; }
.lbl.green { font-style: italic; fill: #3d7a4c; }
.lbl.blue { font-style: italic; fill: #5a84ad; }
.big { font-size: 13px; }
.park-p { font: 700 16px "Noto Sans", sans-serif; fill: #3d93cf; }
.shield { font: 500 12px "Noto Sans", sans-serif; fill: #5e4322; }
.attribution {
  position: absolute;
  right: 0;
  bottom: 0;
  padding: 0 7px 0 8px;
  border-top-left-radius: 5px;
  background: rgba(255, 255, 255, .7);
  font-size: 16px;
  line-height: 26px;
}
.attribution a { color: #616161; }

/* Page */
.page { padding: 40px 31px 75px 16px; }
.picker { display: flex; align-items: flex-start; font-size: 22px; }
.picker label { padding-top: 10px; color: #888; }
.picker-control { display: flex; align-items: center; margin: 8px 0 0 4px; color: #444; }
.picker-control select { appearance: none; border: 0; background: none; padding: 0; }
.picker-control .icon { margin-left: 12px; color: #666; }
.picker .btn { height: 38px; margin-left: 32px; border-radius: 19px; }

.btn {
  display: flex;
  align-items: center;
  height: 32px;
  padding: 0 21px 0 23px;
  border-radius: 16px;
  font-size: 18px;
  font-weight: 500;
  letter-spacing: 2px;
  white-space: nowrap;
}
.btn.outline { border: 1px solid currentColor; }
.btn.green { color: #2f6b1c; font-weight: 700; }
.btn.grey { color: #9e9e9e; }
.btn.white { color: #f0f0f0; }
.btn.white .icon { margin-left: 10px; margin-right: -6px; }
.btn.light { background: #fff; color: #111; box-shadow: 0 2px 4px rgba(0, 0, 0, .4); padding-left: 16px; gap: 12px; }
.btn.text { color: var(--sky); gap: 12px; padding: 0; }
.btn.save { background: var(--sky); color: #fff; font-weight: 700; box-shadow: 0 2px 4px rgba(0, 0, 0, .4); }

.card {
  border-radius: 10px;
  background: #fff;
  overflow: hidden;
  box-shadow: 0 2px 2px rgba(0, 0, 0, .35), 0 0 2px rgba(0, 0, 0, .2);
}
.picker + .card { margin-top: 27px; }
.bar { display: flex; align-items: center; gap: 11px; height: 86px; padding: 0 11px 0 21px; color: #fff; }
.bar-green { background: var(--green); }
.bar-blue { background: var(--blue); }
.search {
  display: flex;
  align-items: center;
  width: 400px;
  height: 34px;
  margin: 11px auto 0 0;
  border-bottom: 1px solid rgba(255, 255, 255, .4);
  color: rgba(255, 255, 255, .6);
}
.search.wide { width: 1192px; }
.search input { border: 0; outline: 0; background: none; padding: 0 0 0 8px; width: 100%; font-size: 22px; }
.search input::placeholder { color: inherit; opacity: 1; }

table { width: 100%; border-collapse: collapse; }
th, td { height: 48px; padding: 0 21px; text-align: left; font-weight: 400; border-bottom: 1px solid var(--line); }
th { height: 54px; font-weight: 500; }
.card tbody tr:last-child td { border-bottom: 0; }
.right { text-align: right; }
.sort { display: flex; align-items: center; }
.sort .icon { width: 26px; height: 26px; }
.badge { width: 26px; height: 26px; border-radius: 13px; background: var(--green); color: #fff; line-height: 26px; text-align: center; }
.badge.blue { background: var(--sky); }
.sites th:first-child { width: 22.4%; }
.sites th:last-child { width: 18.3%; }
.actions { display: flex; justify-content: flex-end; gap: 5px; padding-right: 3px; }
.c-blue { color: #3b67b5; }
.c-grey { color: #616161; }
.c-red { color: #c62828; }
h2 { padding: 29px 0 36px; font-size: 32px; line-height: 36px; font-weight: 400; }

/* Footer */
.footer {
  display: flex;
  justify-content: space-between;
  align-items: center;
  height: 118px;
  padding: 0 19% 0 18.4%;
  border-top: 1px solid var(--line);
  border-bottom: 1px solid var(--line);
  color: #000;
}
.credit { display: flex; align-items: center; gap: 22px; }
.usu { width: 76px; height: 56px; }
.usu text { font: 900 23px Roboto, sans-serif; fill: #0f2439; }
.usu-words {
  display: flex;
  flex-direction: column;
  margin-left: -13px;
  padding: 4px 0 6px 15px;
  border-left: 1px solid #0f2439;
  color: #0f2439;
  font: 16px/22px "Liberation Sans", sans-serif;
}
.brand.small { margin-left: 4px; gap: 10px; }
.small .brand-mark { width: 79px; height: 59px; }
.small .brand-words { font-size: 22px; line-height: 30px; }
.small .brand-words span { font-size: 20px; }

/* Dialogs */
.overlay {
  position: fixed;
  inset: 0;
  z-index: 10;
  display: flex;
  align-items: center;
  justify-content: center;
  padding: 3px 15px 0 0;
  background: rgba(0, 0, 0, .32);
}
.dialog {
  display: flex;
  flex-direction: column;
  border-radius: 10px;
  background: #fff;
  overflow: hidden;
  box-shadow: 0 15px 20px -9px rgba(0, 0, 0, .2), 0 32px 50px 4px rgba(0, 0, 0, .14), 0 12px 61px 11px rgba(0, 0, 0, .12);
}
.dialog-title { height: 86px; padding: 0 22px; font-size: 27px; line-height: 84px; font-weight: 700; color: #fff; }
.dialog-title span { color: #c0c4d4; }
.navy { background: #0d2064; }
.royal { background: #27469b; }
.dialog-foot { display: flex; justify-content: flex-end; align-items: center; gap: 11px; height: 70px; padding: 0 11px; border-top: 1px solid var(--line); }

.access { width: 1495px; max-width: 90%; }
.access-body { display: flex; min-height: 635px; }
.side { display: flex; flex-direction: column; gap: 6px; width: 465px; padding: 9px 0 0 11px; font-size: 17px; font-weight: 500; }
.side a { display: flex; align-items: center; gap: 21px; height: 42px; padding-left: 11px; border-radius: 5px; }
.side .icon { color: #757575; }
.side .on { background: #e6e6e6; }
.side .on .icon { color: var(--ink); }
.panel { flex: 1; }
.panel-head { display: flex; align-items: center; height: 91px; padding: 0 27px 0 66px; }
.panel-head h4 { font-size: 27px; font-weight: 500; }
.c-help { color: #999; margin: 0 auto 0 22px; }
.notice {
  margin: 4px 22px 20px 56px;
  padding: 12px 21px;
  height: 78px;
  border-radius: 5px;
  background: #eaf4e4;
  color: #6ab35c;
  box-shadow: 0 2px 3px rgba(0, 0, 0, .4);
  white-space: nowrap;
}
.keybox { display: flex; align-items: center; justify-content: flex-end; height: 82px; margin: 0 22px 22px 56px; padding-right: 25px; border: 1px solid var(--line); border-radius: 5px; }
.keybox button { color: var(--sky); }
.actions.tight { gap: 0; padding-right: 1px; }

.create { width: 855px; max-width: 90%; }
.fields { display: flex; flex-direction: column; gap: 29px; height: 293px; padding: 22px 22px 0; }
.field { position: relative; height: 54px; border: 1px solid #a0a0a0; border-radius: 5px; }
.field label { position: absolute; left: 15px; top: -12px; padding: 0 5px; background: #fff; color: #868686; font-size: 16px; line-height: 22px; }
.field input, .field select { appearance: none; width: 100%; height: 100%; padding: 0 20px; border: 0; outline: 0; background: none; font-size: 22px; color: #434343; }
.field-caret { position: absolute; right: 16px; top: 11px; color: #757575; }
```
